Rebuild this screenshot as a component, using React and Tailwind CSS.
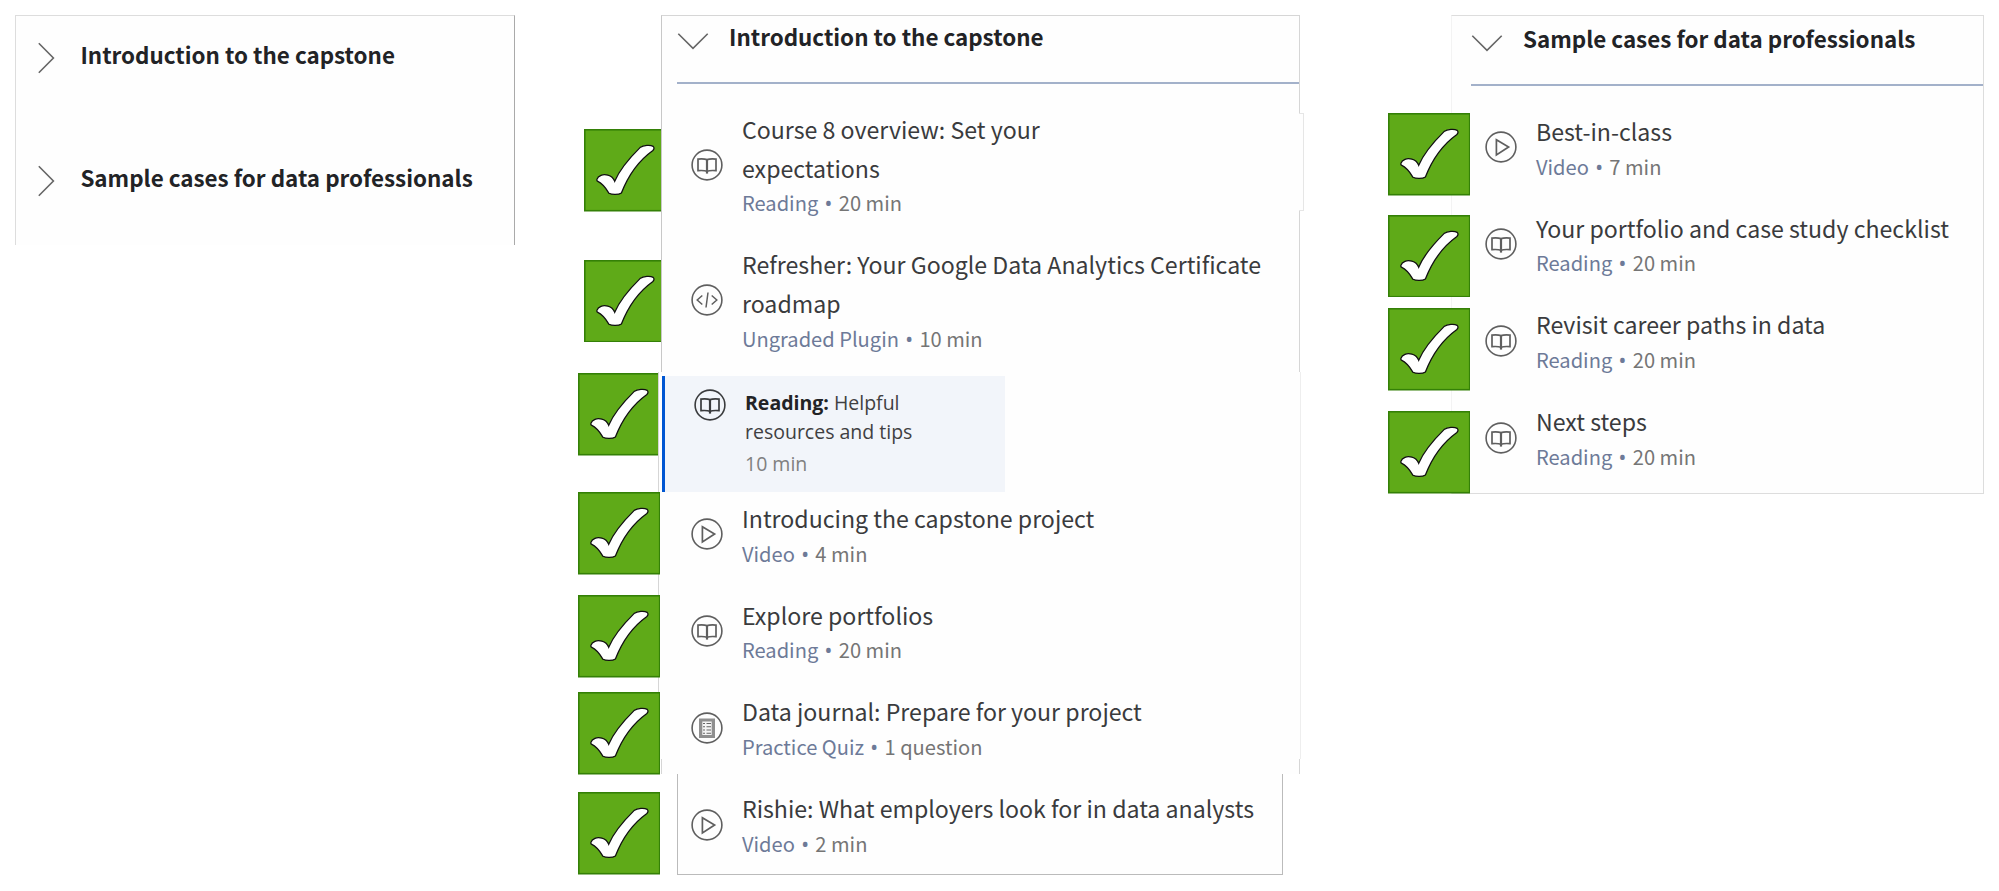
import React from "react";

function Tick({ className = "" }) {
  return (
    <svg viewBox="0 0 82.5 82.5" className={`h-[82.5px] w-[82.5px] shrink-0 ${className}`}>
      <rect width="82.5" height="82.5" fill="#348007" />
      <rect x="1.6" y="1.6" width="79.3" height="79.3" fill="#5faa18" />
      <path
        d="M12.9 50.4C14 46.6 19 44.6 24 46.2C27.6 47.2 29.6 49.6 30.7 52.3C35 42 44.5 30 56 18.6C59.5 16 66.5 15.6 69.2 17.4C70.4 18.6 70.3 20.2 68.6 21.8C55 31.5 44.5 46 37.4 64C34.5 65.9 28 65.9 25 64.3C21.5 58.5 17.5 54 13.4 52.2C12.9 51.7 12.7 51.1 12.9 50.4Z"
        fill="#fff"
        stroke="#111"
        strokeWidth="1.3"
      />
    </svg>
  );
}

const glyphs = {
  book: (
    <g fill="none" strokeWidth="1.7">
      <path d="M16 10.6C13.5 9.8 10 9.9 7 10.1V21.6C10 21.4 13.5 21.3 16 22.2C18.5 21.3 22 21.4 25 21.6V10.1C22 9.9 18.5 9.8 16 10.6Z" />
      <path d="M16 10.6V24.6" strokeWidth="2.2" />
    </g>
  ),
  code: (
    <path d="M11.3 11.5L6.2 16L11.3 20.5M20.7 11.5L25.8 16L20.7 20.5M17 8.5L15 23.5" fill="none" strokeWidth="1.5" />
  ),
  play: <path d="M11.4 8.7L23.6 16L11.4 23.9Z" fill="none" strokeWidth="1.7" />,
  quiz: (
    <g stroke="none">
      <path d="M8 6.5H24V26H8Z" fill="#8f8f8f" />
      <path d="M11.3 9.5H20.7V23H11.3Z" fill="#f4f4f4" />
      <path
        d="M12 11.5H14M15.5 11.5H20M12 14.8H14M15.5 14.8H20M12 18H14M15.5 18H20M12 21.2H14M15.5 21.2H20"
        stroke="#666"
        strokeWidth="1.1"
      />
    </g>
  ),
};

function TypeIcon({ kind, tone = "text-[#5f5f5f]" }) {
  return (
    <svg viewBox="0 0 32 32" className={`h-8 w-8 shrink-0 ${tone}`} stroke="currentColor">
      <circle cx="16" cy="16" r="14.9" fill="none" strokeWidth="1.6" />
      {glyphs[kind]}
    </svg>
  );
}

function Chevron({ down, className = "" }) {
  return (
    <svg viewBox="0 0 32 32" className={`h-8 w-8 shrink-0 ${className}`} fill="none" stroke="#666" strokeWidth="1.6">
      <path d={down ? "M1.3 8.8L16 23.4L30.7 8.8" : "M8.8 1.3L23.4 16L8.8 30.7"} />
    </svg>
  );
}

function Item({ kind, lines, type, length }) {
  return (
    <li className="flex items-center gap-[19.4px] pl-[13.6px]">
      <TypeIcon kind={kind} />
      <div className="pt-[12.8px] pb-[13.3px]">
        {lines.map((line) => (
          <p key={line} className="text-[23.15px] leading-[38.7px] whitespace-nowrap text-[#3a3b3d]">
            {line}
          </p>
        ))}
        <p className="h-[32px] text-[20.1px] leading-[32px] whitespace-nowrap text-[#757575]">
          <span className="text-[#6d7a98]">
            {type} <span className="px-[1.6px] font-['Open_Sans'] text-[22px] leading-none">•</span>
          </span>{" "}
          {length}
        </p>
      </div>
    </li>
  );
}

function Header({ children }) {
  return (
    <div className="flex h-[69px] items-start border-b-2 border-[#a3b1ca]">
      <Chevron down className="mt-[10px]" />
      <h2 className="mt-[5.4px] ml-[20px] text-[22.4px] leading-[32px] font-bold whitespace-nowrap text-[#222326]">
        {children}
      </h2>
    </div>
  );
}

function CurrentItem() {
  return (
    <li className="mt-[8px] -mb-[6px] -ml-[15px] flex h-[116px] w-[343px] items-start gap-[19px] border-l-3 border-[#0056d2] bg-[#f2f5fa] pt-[12px] pl-[29px] font-['Open_Sans',sans-serif] text-[19.5px] leading-[29px] text-[#3f4042]">
      <div className="pt-px">
        <TypeIcon kind="book" tone="text-[#3a3b3d]" />
      </div>
      <div>
        <p>
          <b className="text-[#222326]">Reading:</b> Helpful
        </p>
        <p>resources and tips</p>
        <p className="mt-[3px] text-[#808080]">10 min</p>
      </div>
    </li>
  );
}

export default function App() {
  return (
    <main className="flex h-[891px] w-[1999px] items-start overflow-hidden bg-white pt-[15px] font-['Noto_Sans_CJK_SC',sans-serif]">
      <section className="ml-[15px] flex h-[230px] w-[500px] shrink-0 flex-col border-t border-r border-l border-t-[#ddd] border-r-[#aaa] border-l-[#ddd] bg-[#fefefe] pt-[26px] pl-[14px]">
        {["Introduction to the capstone", "Sample cases for data professionals"].map((title) => (
          <div key={title} className="flex h-[122.5px] shrink-0 items-start">
            <Chevron />
            <h2 className="ml-[18.4px] text-[22.4px] leading-[25.4px] font-bold whitespace-nowrap text-[#222326]">{title}</h2>
          </div>
        ))}
      </section>

      <div className="ml-[62.5px] flex w-[83.5px] shrink-0 flex-col">
        <Tick className="mt-[114px] ml-[6.5px]" />
        <Tick className="mt-[48px] ml-[6.5px]" />
        <Tick className="mt-[31px]" />
        <Tick className="z-10 mt-[36.5px]" />
        <Tick className="z-10 mt-[20.5px]" />
        <Tick className="z-10 mt-[14.5px]" />
        <Tick className="z-10 mt-[17.5px]" />
      </div>

      <section className="relative h-[860px] w-[644px] shrink-0">
        {/* stepped outline behind the list */}
        <div className="absolute inset-0 flex flex-col">
          <div className="h-[98px] w-[639px] border-t border-r border-l border-[#d6d6d6] border-l-[#c8c8c8] bg-[#fefefe]" />
          <div className="flex h-[98px]">
            <div className="w-[638px] border-l border-[#c8c8c8] bg-[#fefefe]" />
            <div className="w-[5px] border-t border-r border-b border-[#e6e6e6] bg-[#fefefe]" />
          </div>
          <div className="h-[161px] w-[639px] border-r border-l border-[#d6d6d6] border-l-[#c8c8c8] bg-[#fefefe]" />
          <div className="-ml-[3px] h-[387px] w-[643px] border-r border-l border-[#eee] border-l-[#d6d6d6] bg-[#fefefe]" />
          <div className="h-[15px] w-[639px] border-r border-l border-[#d6d6d6] bg-[#fefefe]" />
          <div className="ml-[16px] h-[101px] w-[606px] border-r border-b border-l border-[#bbb] bg-[#fefefe]" />
        </div>
        <div className="relative w-[638px] pl-[16px]">
          <Header>Introduction to the capstone</Header>
          <ul className="mt-[13px]">
            <Item kind="book" lines={["Course 8 overview: Set your", "expectations"]} type="Reading" length="20 min" />
            <Item
              kind="code"
              lines={["Refresher: Your Google Data Analytics Certificate", "roadmap"]}
              type="Ungraded Plugin"
              length="10 min"
            />
            <CurrentItem />
            <Item kind="play" lines={["Introducing the capstone project"]} type="Video" length="4 min" />
            <Item kind="book" lines={["Explore portfolios"]} type="Reading" length="20 min" />
            <Item kind="quiz" lines={["Data journal: Prepare for your project"]} type="Practice Quiz" length="1 question" />
            <Item kind="play" lines={["Rishie: What employers look for in data analysts"]} type="Video" length="2 min" />
          </ul>
        </div>
      </section>

      <div className="z-10 -mr-[19.5px] ml-[82.5px] flex w-[83px] shrink-0 flex-col">
        <Tick className="mt-[98px]" />
        <Tick className="mt-[19px]" />
        <Tick className="mt-[11px]" />
        <Tick className="mt-[20.5px]" />
      </div>

      <section className="h-[479px] w-[533px] shrink-0 border border-[#ddd] border-l-[#f3f3f3] bg-[#fefefe] pt-[1px] pl-[19px]">
        <Header>Sample cases for data professionals</Header>
        <ul className="mt-[13px]">
          <Item kind="play" lines={["Best-in-class"]} type="Video" length="7 min" />
          <Item kind="book" lines={["Your portfolio and case study checklist"]} type="Reading" length="20 min" />
          <Item kind="book" lines={["Revisit career paths in data"]} type="Reading" length="20 min" />
          <Item kind="book" lines={["Next steps"]} type="Reading" length="20 min" />
        </ul>
      </section>
    </main>
  );
}
